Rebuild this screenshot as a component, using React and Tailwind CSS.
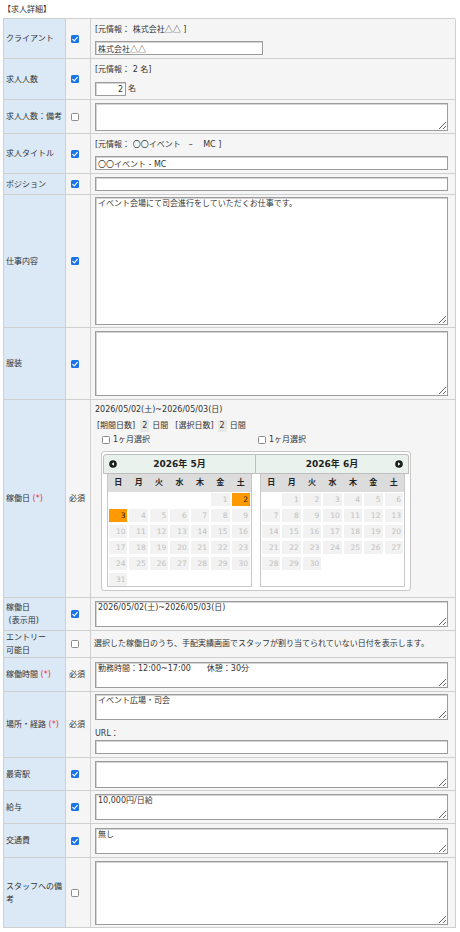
import React from "react";

const FONT = "font-['DejaVu_Sans','Noto_Sans_CJK_JP',sans-serif]";

function Check({ checked }) {
  if (checked) {
    return (
      <span className="block w-[8px] h-[8px] rounded-[1.5px] bg-[#1a73e8] shrink-0">
        <svg viewBox="0 0 8 8" className="block w-[8px] h-[8px]">
          <path d="M1.8 4.3 L3.3 5.8 L6.3 2.4" fill="none" stroke="#fff" strokeWidth="1.2" strokeLinecap="round" strokeLinejoin="round" />
        </svg>
      </span>
    );
  }
  return <span className="block w-[8px] h-[8px] rounded-[1.5px] border border-[#8a8a8a] bg-white shrink-0" />;
}

function Row({ h, label, check, children, valueClass }) {
  return (
    <div className={`grid grid-cols-[62px_25px_365px] ${h}`}>
      <div className="border-r border-b border-[#cfcfcf] bg-[#dbe8f5] flex items-center pl-[2px] leading-[13px]">
        <div>{label}</div>
      </div>
      <div className="border-r border-b border-[#cfcfcf] bg-[#f5f5f5] flex items-center">
        {check === "req" ? (
          <span className="pl-[3px]">必須</span>
        ) : (
          <span className="pl-[5px]">
            <Check checked={check === "on"} />
          </span>
        )}
      </div>
      <div className={`border-r border-b border-[#cfcfcf] bg-[#f5f5f5] pl-[4px] ${valueClass || ""}`}>{children}</div>
    </div>
  );
}

function Area({ h, value }) {
  return (
    <textarea
      readOnly
      value={value || ""}
      className={`block w-[353px] ${h} border border-[#9c9c9c] shadow-[inset_1px_1px_0_#d4d4d4] bg-white px-[2px] pt-0 text-[8px] leading-[12px] text-[#333] outline-none`}
    />
  );
}

function Req() {
  return <span className="text-[#e53935]">(*)</span>;
}

function Cj({ children }) {
  return <span className="font-['Noto_Sans_CJK_JP',sans-serif]">{children}</span>;
}

function buildMonth(startDow, days, rows) {
  const cells = [];
  for (let i = 0; i < rows * 7; i++) {
    const d = i - startDow + 1;
    cells.push(d >= 1 && d <= days ? d : 0);
  }
  return cells;
}

const DOW = ["日", "月", "火", "水", "木", "金", "土"];

function Arrow({ dir }) {
  return (
    <svg viewBox="0 0 8 8" className="block w-[8px] h-[8px] shrink-0">
      <circle cx="4" cy="4" r="3.8" fill="#1b1b1b" />
      {dir === "prev" ? (
        <polygon points="5,2.3 2.5,4 5,5.7" fill="#fff" />
      ) : (
        <polygon points="3,2.3 5.5,4 3,5.7" fill="#fff" />
      )}
    </svg>
  );
}

function Month({ title, cells, selected, side }) {
  return (
    <div className="flex flex-col">
      <div
        className={
          side === "left"
            ? "h-[20px] border border-[#bdbdbd] rounded-tl-[3px] bg-[#e9f2ec] flex items-center px-[5px]"
            : "h-[20px] border-t border-r border-b border-[#bdbdbd] rounded-tr-[3px] bg-[#e9f2ec] flex items-center px-[5px]"
        }
      >
        {side === "left" ? <Arrow dir="prev" /> : <span className="w-[8px] shrink-0" />}
        <span className="flex-1 text-center font-bold text-[9px] text-[#222]">{title}</span>
        {side === "right" ? <Arrow dir="next" /> : <span className="w-[8px] shrink-0" />}
      </div>
      <div className="mx-[4px] h-[113px] border-l border-r border-b border-[#c8c8c8] bg-white">
        <div className="h-[18px] bg-[#dcdcdc] grid grid-cols-7 gap-x-[2px] px-[1px] items-center">
          {DOW.map((d) => (
            <div key={d} className="text-center font-bold text-[#222]">
              {d}
            </div>
          ))}
        </div>
        <div className="grid grid-cols-7 gap-x-[2px] gap-y-[3px] px-[1px] pt-[1px]">
          {cells.map((d, i) =>
            d === 0 ? (
              <div key={i} className="h-[13px]" />
            ) : selected.includes(d) ? (
              <div key={i} className="h-[13px] bg-[#ff9900] text-[#222] text-right pr-[2px] leading-[13px] text-[7.5px]">
                {d}
              </div>
            ) : (
              <div key={i} className="h-[13px] bg-[#f2f2f2] text-[#c0c0c0] text-right pr-[2px] leading-[13px] text-[7.5px]">
                {d}
              </div>
            )
          )}
        </div>
      </div>
    </div>
  );
}

function Calendar() {
  const may = buildMonth(5, 31, 6);
  const june = buildMonth(1, 30, 5);
  return (
    <div className="mt-[5px] ml-[6px] w-[310px] border border-[#c8c8c8] rounded-[3px] bg-white px-[1px] pt-[2px] pb-[3px] grid grid-cols-2">
      <Month title="2026年 5月" cells={may} selected={[2, 3]} side="left" />
      <Month title="2026年 6月" cells={june} selected={[]} side="right" />
    </div>
  );
}

const INPUT = "block h-[14px] border border-[#9c9c9c] shadow-[inset_1px_1px_0_#d4d4d4] bg-white px-[2px] leading-[12px] outline-none";

export default function App() {
  return (
    <div className={`w-[460px] min-h-[932px] bg-white text-[#333] text-[8px] leading-[12px] ${FONT}`}>
      <div className="h-[18px] pt-[4px] pl-[3px]">【求人詳細】</div>
      <div className="ml-[3px] w-[452px] border-l border-t border-[#cfcfcf]">
        <Row h="h-[40px]" label="クライアント" check="on" valueClass="pt-[4px]">
          <div className="h-[12px]">
            [元情報： 株式会社<Cj>△△</Cj> ]
          </div>
          <input readOnly value="株式会社△△" className={`mt-[6px] w-[168px] ${INPUT} font-['Noto_Sans_CJK_JP',sans-serif]`} />
        </Row>
        <Row h="h-[41px]" label="求人人数" check="on" valueClass="pt-[5px]">
          <div className="h-[12px]">[元情報： 2 名]</div>
          <div className="mt-[6px] flex items-center">
            <input readOnly value="2" className={`w-[31px] text-right ${INPUT}`} />
            <span className="ml-[2px]">名</span>
          </div>
        </Row>
        <Row h="h-[34px]" label="求人人数：備考" check="off" valueClass="flex items-center">
          <Area h="h-[28px]" />
        </Row>
        <Row h="h-[40px]" label="求人タイトル" check="on" valueClass="pt-[4px]">
          <div className="h-[12px]">
            [元情報： <Cj>〇〇</Cj>イベント　–　 MC ]
          </div>
          <input readOnly value="〇〇イベント - MC" className={`mt-[6px] w-[353px] ${INPUT}`} />
        </Row>
        <Row h="h-[21px]" label="ポジション" check="on" valueClass="flex items-center">
          <input readOnly value="" className={`w-[353px] ${INPUT}`} />
        </Row>
        <Row h="h-[133px]" label="仕事内容" check="on" valueClass="flex items-center">
          <Area h="h-[128px]" value="イベント会場にて司会進行をしていただくお仕事です。" />
        </Row>
        <Row h="h-[72px]" label="服装" check="on" valueClass="flex items-center">
          <Area h="h-[65px]" />
        </Row>
        <Row
          h="h-[198px]"
          label={
            <>
              稼働日 <Req />
            </>
          }
          check="req"
          valueClass="pt-[4px]"
        >
          <div className="h-[12px]">2026/05/02(土)~2026/05/03(日)</div>
          <div className="mt-[3px] h-[13px] flex items-center pl-[2px]">
            <span>[期間日数]</span>
            <span className="ml-[5px] px-[2px] bg-[#e8e8e8] leading-[12px]">2</span>
            <span className="ml-[3px]">日間</span>
            <span className="ml-[7px]">[選択日数]</span>
            <span className="ml-[4px] px-[2px] bg-[#e8e8e8] leading-[12px]">2</span>
            <span className="ml-[3px]">日間</span>
          </div>
          <div className="mt-[2px] h-[12px] flex items-center">
            <div className="w-[163px] pl-[7px] flex items-center gap-[3px]">
              <Check checked={false} />
              <span>1ヶ月選択</span>
            </div>
            <div className="flex items-center gap-[3px]">
              <Check checked={false} />
              <span>1ヶ月選択</span>
            </div>
          </div>
          <Calendar />
        </Row>
        <Row
          h="h-[33px]"
          label={
            <>
              稼働日
              <br />
              {"\u00a0(表示用)"}
            </>
          }
          check="on"
          valueClass="flex items-center"
        >
          <Area h="h-[26px]" value="2026/05/02(土)~2026/05/03(日)" />
        </Row>
        <Row
          h="h-[27px]"
          label={
            <>
              エントリー
              <br />
              可能日
            </>
          }
          check="off"
          valueClass="flex items-center !pl-[3px]"
        >
          <span>選択した稼働日のうち、手配実績画面でスタッフが割り当てられていない日付を表示します。</span>
        </Row>
        <Row
          h="h-[34px]"
          label={
            <>
              稼働時間 <Req />
            </>
          }
          check="req"
          valueClass="flex items-center"
        >
          <Area h="h-[26px]" value="勤務時間：12:00~17:00　　休憩：30分" />
        </Row>
        <Row
          h="h-[66px]"
          label={
            <>
              場所・経路 <Req />
            </>
          }
          check="req"
          valueClass="pt-[2px]"
        >
          <Area h="h-[26px]" value="イベント広場・司会" />
          <div className="mt-[8px] h-[12px]">URL：</div>
          <input readOnly value="" className={`w-[353px] ${INPUT}`} />
        </Row>
        <Row h="h-[33px]" label="最寄駅" check="on" valueClass="flex items-center">
          <Area h="h-[27px]" />
        </Row>
        <Row h="h-[33px]" label="給与" check="on" valueClass="flex items-center">
          <Area h="h-[26px]" value="10,000円/日給" />
        </Row>
        <Row h="h-[34px]" label="交通費" check="on" valueClass="flex items-center">
          <Area h="h-[26px]" value="無し" />
        </Row>
        <Row h="h-[70px]" label="スタッフへの備考" check="off" valueClass="flex items-center">
          <Area h="h-[64px]" />
        </Row>
      </div>
    </div>
  );
}
